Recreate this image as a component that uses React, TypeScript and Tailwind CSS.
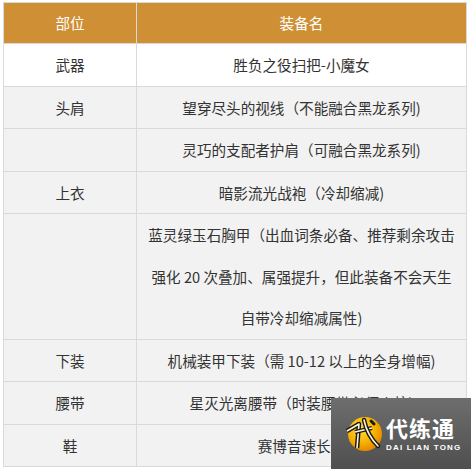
import React from "react";

const rows: { part: string; name: React.ReactNode; white?: boolean }[] = [
  { part: "武器", name: "胜负之役扫把-小魔女", white: true },
  { part: "头肩", name: "望穿尽头的视线（不能融合黑龙系列)" },
  { part: "", name: "灵巧的支配者护肩（可融合黑龙系列)" },
  { part: "上衣", name: "暗影流光战袍（冷却缩减)" },
  {
    part: "",
    name: (
      <>
        蓝灵绿玉石胸甲（出血词条必备、推荐剩余攻击
        <br />
        强化 20 次叠加、属强提升，但此装备不会天生
        <br />
        自带冷却缩减属性)
      </>
    ),
  },
  { part: "下装", name: "机械装甲下装（需 10-12 以上的全身增幅)" },
  { part: "腰带", name: "星灭光离腰带（时装腰带必须火抗)" },
  { part: "鞋", name: "赛博音速长靴" },
];

function Logo() {
  return (
    <svg width="38" height="38" viewBox="0 0 38 38">
      <defs>
        <radialGradient id="lg" cx="40%" cy="35%" r="65%">
          <stop offset="0%" stopColor="#ffe040" />
          <stop offset="60%" stopColor="#f7b400" />
          <stop offset="100%" stopColor="#e58a00" />
        </radialGradient>
      </defs>
      <circle cx="20" cy="19" r="17" fill="url(#lg)" />
      {/* stylized 代 strokes */}
      <path d="M2 16 L14 9 L12 33" fill="none" stroke="#1a1a1a" strokeWidth="4.5" strokeLinejoin="round" />
      <path d="M2 16 L14 9 L12 33" fill="none" stroke="#fff5d0" strokeWidth="1.6" strokeLinejoin="round" />
      <path d="M10 17 L27 13" fill="none" stroke="#1a1a1a" strokeWidth="4" />
      <path d="M10 17 L27 13" fill="none" stroke="#fff5d0" strokeWidth="1.4" />
      <path d="M19 5 Q22 20 33 31" fill="none" stroke="#1a1a1a" strokeWidth="4.5" strokeLinecap="round" />
      <path d="M19 5 Q22 20 33 31" fill="none" stroke="#fff5d0" strokeWidth="1.6" strokeLinecap="round" />
      <path d="M26 6 L29 9" fill="none" stroke="#1a1a1a" strokeWidth="3" strokeLinecap="round" />
    </svg>
  );
}

export default function App() {
  return (
    <div
      className="relative w-[471px] h-[469px] bg-white overflow-hidden"
      style={{ fontFamily: '"Noto Sans CJK SC", "Liberation Sans", sans-serif' }}
    >
      <div className="pt-[2px] pl-[3px]">
        <table className="border-collapse w-[464px] table-fixed text-[14.6px] text-[#333]">
          <colgroup>
            <col className="w-[133px]" />
            <col />
          </colgroup>
          <thead>
            <tr className="bg-[#cf8f35] text-white">
              <th className="border border-[#d9d9d9] font-normal leading-[40px] text-center">部位</th>
              <th className="border border-[#d9d9d9] font-normal leading-[40px] text-center">装备名</th>
            </tr>
          </thead>
          <tbody>
            {rows.map((r, i) => (
              <tr key={i} className={r.white ? "bg-white" : "bg-[#f2f2f2]"}>
                <td className="border border-[#d9d9d9] text-center leading-[41.5px] p-0">{r.part}</td>
                <td className="border border-[#d9d9d9] text-center leading-[41.5px] px-[8px] py-0">{r.name}</td>
              </tr>
            ))}
          </tbody>
        </table>
      </div>

      <div className="absolute left-[331px] top-[398px] w-[140px] h-[71px] bg-gradient-to-b from-[#6e6e6e] to-[#4f4f4f] flex items-center pl-[14px] gap-[3px]">
        <Logo />
        <div className="flex flex-col items-start">
          <span className="text-white font-bold text-[22px] leading-[24px] tracking-[1px]">代练通</span>
          <span
            className="text-white text-[8px] leading-[10px] mt-[4px] tracking-[1.2px] font-bold"
            style={{ fontFamily: '"Liberation Sans", sans-serif' }}
          >
            DAI LIAN TONG
          </span>
        </div>
      </div>
    </div>
  );
}
